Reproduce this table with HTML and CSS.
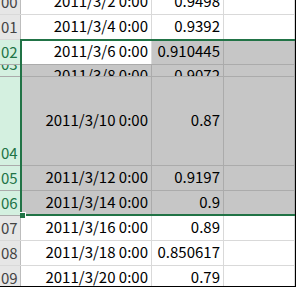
FILE: index.html
```html
<!DOCTYPE html>
<html lang="ja">
<head>
<meta charset="utf-8">
<title>Sheet</title>
<link rel="stylesheet" href="styles.css">
</head>
<body>
<div class="sheet">
  <div class="row r-first">
    <div class="hd"><span>00</span></div>
    <div class="c ca"><span>2011/3/2 0:00</span></div>
    <div class="c cb"><span>0.9498</span></div>
    <div class="c cc"></div>
  </div>
  <div class="row">
    <div class="hd"><span>01</span></div>
    <div class="c ca"><span>2011/3/4 0:00</span></div>
    <div class="c cb"><span>0.9392</span></div>
    <div class="c cc"></div>
  </div>
  <div class="row on">
    <div class="hd"><span>02</span></div>
    <div class="c ca active"><span>2011/3/6 0:00</span></div>
    <div class="c cb"><span>0.910445</span></div>
    <div class="c cc"></div>
  </div>
  <div class="row on r-short">
    <div class="hd"><span>03</span></div>
    <div class="c ca"><span>2011/3/8 0:00</span></div>
    <div class="c cb"><span>0.9072</span></div>
    <div class="c cc"></div>
  </div>
  <div class="row on r-tall">
    <div class="hd"><span>04</span></div>
    <div class="c ca"><span>2011/3/10 0:00</span></div>
    <div class="c cb"><span>0.87</span></div>
    <div class="c cc"></div>
  </div>
  <div class="row on">
    <div class="hd"><span>05</span></div>
    <div class="c ca"><span>2011/3/12 0:00</span></div>
    <div class="c cb"><span>0.9197</span></div>
    <div class="c cc"></div>
  </div>
  <div class="row on">
    <div class="hd"><span>06</span></div>
    <div class="c ca"><span>2011/3/14 0:00</span></div>
    <div class="c cb"><span>0.9</span></div>
    <div class="c cc"></div>
  </div>
  <div class="row">
    <div class="hd"><span>07</span></div>
    <div class="c ca"><span>2011/3/16 0:00</span></div>
    <div class="c cb"><span>0.89</span></div>
    <div class="c cc"></div>
  </div>
  <div class="row">
    <div class="hd"><span>08</span></div>
    <div class="c ca"><span>2011/3/18 0:00</span></div>
    <div class="c cb"><span>0.850617</span></div>
    <div class="c cc"></div>
  </div>
  <div class="row">
    <div class="hd"><span>09</span></div>
    <div class="c ca"><span>2011/3/20 0:00</span></div>
    <div class="c cb"><span>0.79</span></div>
    <div class="c cc"></div>
  </div>
  <div class="sel"></div>
  <div class="handle"></div>
</div>
</body>
</html>
```

FILE: styles.css
```css
* { box-sizing: border-box; }
html, body { margin: 0; padding: 0; background: #fff; }
body {
  font-family: "Noto Sans CJK JP", "Noto Sans", sans-serif;
  font-size: 15px;
  color: #000;
}
.sheet {
  position: relative;
  width: 296px;
  height: 287px;
  border-right: 1px solid #000;
  border-bottom: 1px solid #000;
  overflow: hidden;
}
.row {
  display: flex;
  height: 25px;
  border-bottom: 1px solid #d9d9d9;
  background: #fff;
}
.r-first { margin-top: -10px; }
.r-short { height: 12px; }
.r-tall { height: 89px; }

.hd {
  width: 21px;
  flex: none;
  display: flex;
  align-items: flex-end;
  padding: 0 0 5px 1px;
  background: #e6e6e6;
  color: #444;
  border-right: 1px solid #bdbdbd;
  overflow: hidden;
  font-size: 15px;
}
.hd span, .c span { line-height: 15px; white-space: nowrap; }

.c {
  flex: none;
  display: flex;
  align-items: center;
  justify-content: flex-end;
  padding: 0 3px 3px 0;
  border-right: 1px solid #d9d9d9;
  overflow: hidden;
}
.ca { width: 131px; }
.cb { width: 72px; }
.cc { width: 71px; }

.r-short .c { padding: 2px 3px 0 0; align-items: flex-start; }

.row.on { border-bottom-color: #ababab; }
.row.on .hd {
  background: #d4f0e0;
  color: #217346;
  border-bottom: 0;
}
.row.on .c {
  background: #c6c6c6;
  border-right-color: #ababab;
}
.row.on .c.active { background: #fff; border-right-color: #d9d9d9; }

.sel {
  position: absolute;
  left: 20px;
  top: 39px;
  width: 300px;
  height: 177px;
  border: 2px solid #217346;
  border-right: 0;
}
.handle {
  position: absolute;
  left: 20px;
  top: 212px;
  width: 6px;
  height: 6px;
  background: #217346;
  border-top: 1px solid #fff;
  border-right: 1px solid #fff;
}
```
